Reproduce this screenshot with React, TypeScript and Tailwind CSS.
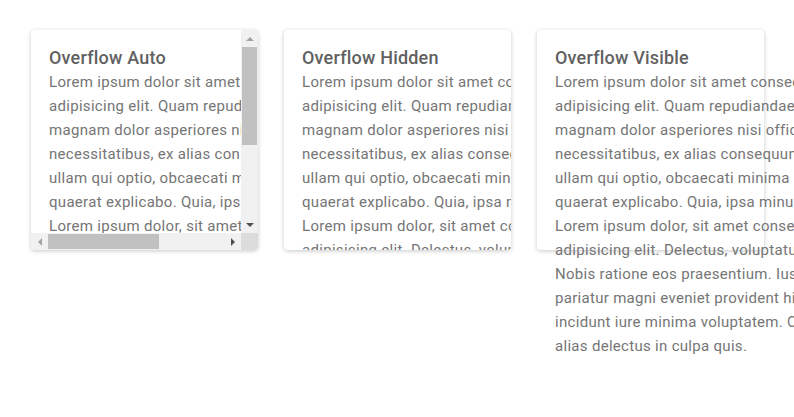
const lines = [
  "Lorem ipsum dolor sit amet consectetur",
  "adipisicing elit. Quam repudiandae odit",
  "magnam dolor asperiores nisi officia quos",
  "necessitatibus, ex alias consequuntur",
  "ullam qui optio, obcaecati minima rerum",
  "quaerat explicabo. Quia, ipsa minus.",
  "Lorem ipsum dolor, sit amet consectetur",
  "adipisicing elit. Delectus, voluptatum.",
  "Nobis ratione eos praesentium. Iusto",
  "pariatur magni eveniet provident hic",
  "incidunt iure minima voluptatem. Cum",
  "alias delectus in culpa quis.",
];

function Content({ title }: { title: string }) {
  return (
    <div className="w-[333px] pl-[18px] pt-4 pb-[22px]">
      <h3 className="text-[18px] leading-6 font-medium tracking-[0.2px] text-[#616161]">{title}</h3>
      <div className="text-[15px] leading-6 tracking-[0.3px] text-[#757575]">
        {lines.map((l, i) => (
          <div key={i} className="whitespace-nowrap">
            {l}
          </div>
        ))}
      </div>
    </div>
  );
}

function Arrow({ dir, color }: { dir: "up" | "down" | "left" | "right"; color: string }) {
  const pts = {
    up: "0,4 4,0 8,4",
    down: "0,0 8,0 4,4",
    left: "4,0 4,8 0,4",
    right: "0,0 4,4 0,8",
  }[dir];
  const vertical = dir === "up" || dir === "down";
  return (
    <div className="w-[17px] h-[17px] flex items-center justify-center bg-[#f1f1f1] shrink-0">
      <svg width={vertical ? 8 : 4} height={vertical ? 4 : 8} viewBox={vertical ? "0 0 8 4" : "0 0 4 8"}>
        <polygon points={pts} fill={color} />
      </svg>
    </div>
  );
}

function ScrollCard({ title }: { title: string }) {
  return (
    <div className="w-[227px] h-[220px] shrink-0 rounded bg-white shadow-[0_1px_4px_rgba(0,0,0,0.22)] overflow-hidden grid grid-cols-[minmax(0,1fr)_17px] grid-rows-[minmax(0,1fr)_17px]">
      <div className="overflow-hidden">
        <Content title={title} />
      </div>
      {/* vertical scrollbar */}
      <div className="flex flex-col bg-[#f1f1f1]">
        <Arrow dir="up" color="#a3a3a3" />
        <div className="flex-1 px-[1px]">
          <div className="h-[98px] bg-[#c1c1c1]" />
        </div>
        <Arrow dir="down" color="#505050" />
      </div>
      {/* horizontal scrollbar */}
      <div className="flex bg-[#f1f1f1]">
        <Arrow dir="left" color="#a3a3a3" />
        <div className="flex-1 py-[1px]">
          <div className="w-[111px] h-full bg-[#c1c1c1]" />
        </div>
        <Arrow dir="right" color="#505050" />
      </div>
      <div className="bg-[#dcdcdc]" />
    </div>
  );
}

function Card({ title, overflow }: { title: string; overflow: string }) {
  return (
    <div
      className={`w-[227px] h-[220px] shrink-0 rounded bg-white shadow-[0_1px_4px_rgba(0,0,0,0.22)] ${overflow}`}
    >
      <Content title={title} />
    </div>
  );
}

export default function App() {
  return (
    <div className="w-[794px] h-[417px] overflow-hidden bg-white font-['Roboto',sans-serif]">
      <div className="flex items-start gap-[26px] pl-[31px] pt-[30px]">
        <ScrollCard title="Overflow Auto" />
        <Card title="Overflow Hidden" overflow="overflow-hidden" />
        <Card title="Overflow Visible" overflow="overflow-visible" />
      </div>
    </div>
  );
}
